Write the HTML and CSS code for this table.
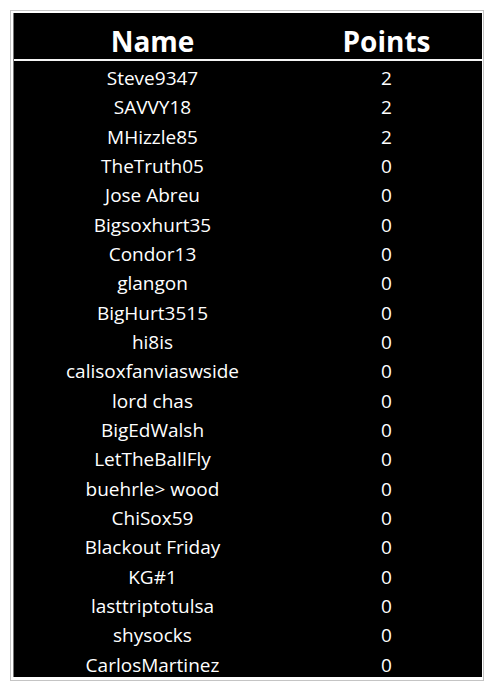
FILE: index.html
```html
<!DOCTYPE html>
<html>
<head>
<meta charset="utf-8">
<link rel="stylesheet" href="styles.css">
</head>
<body>
<div class="frame">
  <div class="board">
    <div class="head">
      <div class="hcell">Name</div>
      <div class="hcell">Points</div>
    </div>
    <div class="rows">
      <div class="cell">Steve9347</div><div class="cell">2</div>
      <div class="cell">SAVVY18</div><div class="cell">2</div>
      <div class="cell">MHizzle85</div><div class="cell">2</div>
      <div class="cell">TheTruth05</div><div class="cell">0</div>
      <div class="cell">Jose Abreu</div><div class="cell">0</div>
      <div class="cell">Bigsoxhurt35</div><div class="cell">0</div>
      <div class="cell">Condor13</div><div class="cell">0</div>
      <div class="cell">glangon</div><div class="cell">0</div>
      <div class="cell">BigHurt3515</div><div class="cell">0</div>
      <div class="cell">hi8is</div><div class="cell">0</div>
      <div class="cell">calisoxfanviaswside</div><div class="cell">0</div>
      <div class="cell">lord chas</div><div class="cell">0</div>
      <div class="cell">BigEdWalsh</div><div class="cell">0</div>
      <div class="cell">LetTheBallFly</div><div class="cell">0</div>
      <div class="cell">buehrle&gt; wood</div><div class="cell">0</div>
      <div class="cell">ChiSox59</div><div class="cell">0</div>
      <div class="cell">Blackout Friday</div><div class="cell">0</div>
      <div class="cell">KG#1</div><div class="cell">0</div>
      <div class="cell">lasttriptotulsa</div><div class="cell">0</div>
      <div class="cell">shysocks</div><div class="cell">0</div>
      <div class="cell">CarlosMartinez</div><div class="cell">0</div>
    </div>
  </div>
</div>
</body>
</html>
```
FILE: styles.css
```css
html, body {
  margin: 0;
  padding: 0;
  background: #fff;
}
body {
  padding: 10px 0 0 10px;
  font-family: "Open Sans", "DejaVu Sans", sans-serif;
  color: #fff;
}
.frame {
  border: 1px solid #c4c4c4;
  padding: 2px 1px 3px 2px;
  box-sizing: border-box;
  width: 474px;
}
.board {
  background: #000;
  border-left: 1px solid #777;
}
.head {
  display: grid;
  grid-template-columns: 277px 1fr;
  height: 46px;
  border-bottom: 2px solid #f4f4f4;
}
.hcell {
  text-align: center;
  font-weight: 700;
  font-size: 28px;
  line-height: 46px;
  padding-top: 5px;
  box-sizing: border-box;
  height: 46px;
}
.rows {
  display: grid;
  grid-template-columns: 277px 1fr;
  grid-auto-rows: 29.33px;
}
.cell {
  text-align: center;
  font-size: 19px;
  font-weight: 500;
  line-height: 23.33px;
  padding-top: 6px;
  white-space: nowrap;
  overflow: hidden;
}
```
